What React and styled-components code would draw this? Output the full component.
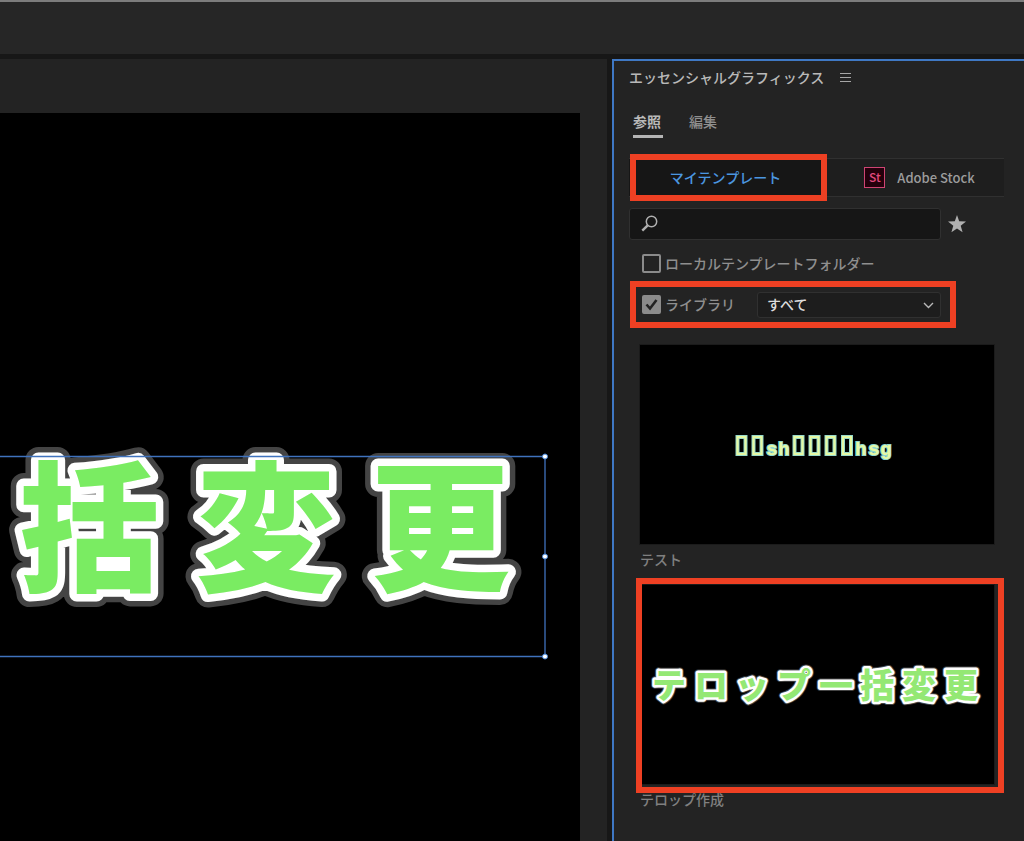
import React, { useState } from "react";
import styled, { createGlobalStyle } from "styled-components";

const GlobalStyle = createGlobalStyle`
  *,
  *::before,
  *::after {
    box-sizing: border-box;
  }

  body {
    margin: 0;
    background: #171717;
    color: #8f8f8f;
    font-family: "Noto Sans CJK JP", "Noto Sans", sans-serif;
    font-size: 14px;
    font-weight: 500;
    line-height: 20px;
  }

  button,
  input,
  select {
    margin: 0;
    font: inherit;
    color: inherit;
  }
`;

const Workspace = styled.div`
  display: flex;
  flex-direction: column;
  gap: 5px;
  min-height: 100vh;
`;

const TopBar = styled.header`
  height: 54px;
  background: #262626;
  border-top: 2px solid #7c7c7c;
`;

const Panels = styled.main`
  flex: 1;
  display: flex;
  gap: 5px;
`;

const Monitor = styled.section`
  flex: 1;
  min-width: 0;
  display: flex;
  padding: 54px 27px 0 0;
  background: #232323;
`;

const Program = styled.svg`
  flex: 1;
  min-width: 0;
  background: #000;
`;

const GraphicsPanel = styled.aside`
  width: 412px;
  padding: 0 20px 24px 15px;
  background: #232323;
  border: solid #3f78c4;
  border-width: 2px 0 0 2px;
`;

const PanelHeader = styled.div`
  display: flex;
  align-items: center;
  gap: 16px;
  height: 32px;
`;

const PanelTitle = styled.h1`
  margin: 0;
  font-size: 14px;
  font-weight: 500;
  color: #b9b9b9;
`;

const IconButton = styled.button`
  display: flex;
  padding: 0;
  border: 0;
  background: none;
  color: #a6a6a6;
`;

const Tabs = styled.div`
  display: flex;
  gap: 26px;
  margin-top: 14px;
  padding-left: 4px;
`;

const Tab = styled.button`
  height: 31px;
  padding: 0 2px 0 0;
  border: 0;
  border-bottom: 3px solid ${({ $active }) => ($active ? "#b4b4b4" : "transparent")};
  background: none;
  font-weight: ${({ $active }) => ($active ? 700 : 500)};
  color: ${({ $active }) => ($active ? "#b9b9b9" : "#8f8f8f")};
`;

const Marked = styled.div`
  position: relative;

  &::after {
    content: "";
    position: absolute;
    inset: ${({ $inset }) => $inset};
    border: 6px solid #ee4023;
    pointer-events: none;
  }
`;

const Sources = styled.div`
  display: grid;
  grid-template-columns: 197px 1fr;
  margin-top: 20px;
`;

const Source = styled.button`
  display: flex;
  align-items: center;
  justify-content: center;
  gap: 12px;
  width: 100%;
  height: 39px;
  padding: 0 4px 2px 0;
  border: solid #303030;
  border-width: 1px 0;
  background: ${({ $active }) => ($active ? "#161616" : "#1e1e1e")};
  color: ${({ $active }) => ($active ? "#4b96e0" : "#9c9c9c")};
`;

const StockSource = styled(Source)`
  padding: 0 0 0 9px;
  font-size: 13px;
`;

const StockBadge = styled.span`
  width: 21px;
  height: 21px;
  border: 1px solid #cf4473;
  background: #24000c;
  color: #e0487c;
  font-size: 12px;
  line-height: 18px;
`;

const SearchRow = styled.div`
  display: flex;
  align-items: center;
  gap: 7px;
  margin-top: 11px;
`;

const SearchBox = styled.label`
  display: flex;
  align-items: center;
  gap: 8px;
  width: 312px;
  height: 32px;
  padding: 0 11px 2px;
  border: 1px solid #303030;
  border-radius: 3px;
  background: #161616;
  color: #b0b0b0;
`;

const SearchInput = styled.input`
  flex: 1;
  min-width: 0;
  border: 0;
  outline: 0;
  background: none;
`;

const FilterRow = styled.div`
  display: flex;
  align-items: center;
  height: 26px;
  margin-top: ${({ $gap }) => $gap};
  padding-left: 13px;
`;

const CheckLabel = styled.label`
  display: flex;
  align-items: center;
  gap: 4px;
  padding-bottom: 2px;
`;

const CheckMark = styled.span`
  display: grid;
  width: 19px;
  height: 19px;

  > * {
    grid-area: 1 / 1;
  }

  svg {
    pointer-events: none;
  }
`;

const Checkbox = styled.input`
  appearance: none;
  width: 19px;
  height: 19px;
  border: 2px solid #8b8b8b;
  border-radius: 2px;

  &:checked {
    background: #8b8b8b;
  }
`;

const SelectBox = styled.div`
  display: grid;
  align-items: center;
  width: 184px;
  margin-left: 22px;

  > * {
    grid-area: 1 / 1;
  }

  svg {
    justify-self: end;
    margin-right: 7px;
    pointer-events: none;
  }
`;

const Select = styled.select`
  appearance: none;
  width: 100%;
  height: 26px;
  padding: 0 28px 2px 9px;
  border: 1px solid #303030;
  border-radius: 3px;
  background: #1d1d1d;
  color: #dcdcdc;
`;

const Gallery = styled.div`
  display: flex;
  flex-direction: column;
  gap: 9px;
  margin-top: 27px;
  padding: 0 10px 0 11px;
`;

const Template = styled.figure`
  margin: 0;
`;

const Thumb = styled.svg`
  display: block;
  width: 100%;
  height: 199px;
  background: #000;
  outline: 1px solid #1b1b1b;
`;

const TemplateName = styled.figcaption`
  padding: 5px 0 7px;
  color: #808080;
`;

const Telop = styled.text`
  font-family: "Noto Sans CJK JP", sans-serif;
  font-weight: 900;
  font-size: ${({ $size }) => $size}px;
  stroke-linejoin: round;
`;

// outer edge, white edge and fill, painted from back to front
function OutlinedText({ children, x, y, size, inner, outer, fill }) {
  return (
    <>
      <Telop aria-hidden="true" x={x} y={y} $size={size} fill="#444" stroke="#444" strokeWidth={outer}>
        {children}
      </Telop>
      <Telop x={x} y={y} $size={size} fill={fill} stroke="#fff" strokeWidth={inner} paintOrder="stroke">
        {children}
      </Telop>
    </>
  );
}

function ProgramMonitor() {
  return (
    <Monitor>
      <Program viewBox="0 0 580 728" preserveAspectRatio="xMaxYMin slice">
        <OutlinedText x="19 196 370" y="467" size={140} inner={15} outer={26} fill="#7aec62">
          括変更
        </OutlinedText>
        <path d="M-2000 343.500H545V543.500H-2000" fill="none" stroke="#3f72bd" strokeWidth="1.300" />
        {[343.5, 443.5, 543.5].map((cy) => (
          <circle key={cy} cx="545" cy={cy} r="2.500" fill="#fff" stroke="#4383d6" />
        ))}
      </Program>
    </Monitor>
  );
}

function MenuIcon() {
  return (
    <svg width="11" height="11" viewBox="0 0 11 11" stroke="currentColor" strokeWidth="1.200">
      <path d="M0 1.500H11M0 5.500H11M0 9.500H11" />
    </svg>
  );
}

function SearchIcon() {
  return (
    <svg width="17" height="17" viewBox="0 0 17 17" fill="none" stroke="currentColor">
      <circle cx="10.500" cy="6.500" r="5.200" strokeWidth="1.500" />
      <path d="M6.700 10.300L1.300 15.700" strokeWidth="2.400" />
    </svg>
  );
}

function StarIcon() {
  return (
    <svg width="18" height="18" viewBox="0 0 18 18" fill="#b0b0b0">
      <path d="M9 0L11.200 6.300L18 6.600L12.700 10.700L14.600 17.300L9 13.400L3.400 17.300L5.300 10.700L0 6.600L6.800 6.300Z" />
    </svg>
  );
}

function CheckField({ label, checked, onChange }) {
  return (
    <CheckLabel>
      <CheckMark>
        <Checkbox type="checkbox" checked={checked} onChange={(e) => onChange(e.target.checked)} />
        {checked && (
          <svg width="19" height="19" viewBox="0 0 19 19" fill="none" stroke="#232323" strokeWidth="2.600">
            <path d="M4.500 9.500L8 13.500L14.500 5" />
          </svg>
        )}
      </CheckMark>
      {label}
    </CheckLabel>
  );
}

function TestThumb() {
  return (
    <Thumb viewBox="0 0 354 199">
      <g fill="none" stroke="#8fd6cf" strokeWidth="4">
        {[97.5, 113.5, 154.5, 170.5, 186.5, 203].map((x) => (
          <rect key={x} x={x} y="92" width="8" height="17" />
        ))}
      </g>
      <g fill="none" stroke="#e6f9a4" strokeWidth="2.200">
        {[97.5, 113.5, 154.5, 170.5, 186.5, 203].map((x) => (
          <rect key={x} x={x} y="92" width="8" height="17" />
        ))}
      </g>
      <g
        fontFamily="Liberation Mono, monospace"
        fontWeight="700"
        fontSize="19"
        fill="#e6f9a4"
        stroke="#8fd6cf"
        strokeWidth="2"
        paintOrder="stroke"
      >
        <text x="126 138" y="110">sh</text>
        <text x="215 228 240" y="110">hsg</text>
      </g>
    </Thumb>
  );
}

export default function App() {
  const [tab, setTab] = useState("参照");
  const [local, setLocal] = useState(false);
  const [library, setLibrary] = useState(true);

  return (
    <>
      <GlobalStyle />
      <Workspace>
        <TopBar />
        <Panels>
          <ProgramMonitor />
          <GraphicsPanel>
            <PanelHeader>
              <PanelTitle>エッセンシャルグラフィックス</PanelTitle>
              <IconButton aria-label="パネルメニュー">
                <MenuIcon />
              </IconButton>
            </PanelHeader>

            <Tabs>
              {["参照", "編集"].map((name) => (
                <Tab key={name} $active={tab === name} onClick={() => setTab(name)}>
                  {name}
                </Tab>
              ))}
            </Tabs>

            <Sources>
              <Marked $inset="-4px -1px -4px 1px">
                <Source $active>マイテンプレート</Source>
              </Marked>
              <StockSource>
                <StockBadge>St</StockBadge>
                Adobe Stock
              </StockSource>
            </Sources>

            <SearchRow>
              <SearchBox>
                <SearchIcon />
                <SearchInput type="text" aria-label="検索" />
              </SearchBox>
              <IconButton aria-label="お気に入り">
                <StarIcon />
              </IconButton>
            </SearchRow>

            <FilterRow $gap="11px">
              <CheckField label="ローカルテンプレートフォルダー" checked={local} onChange={setLocal} />
            </FilterRow>
            <Marked $inset="-11px 48px -10px 1px">
              <FilterRow $gap="15px">
                <CheckField label="ライブラリ" checked={library} onChange={setLibrary} />
                <SelectBox>
                  <Select aria-label="ライブラリ">
                    <option>すべて</option>
                  </Select>
                  <svg width="11" height="7" viewBox="0 0 11 7" fill="none" stroke="#b9b9b9" strokeWidth="1.400">
                    <path d="M1 1L5.500 5.500L10 1" />
                  </svg>
                </SelectBox>
              </FilterRow>
            </Marked>

            <Gallery>
              <Template>
                <TestThumb />
                <TemplateName>テスト</TemplateName>
              </Template>
              <Template>
                <Marked $inset="-7px -10px -9px -4px">
                  <Thumb viewBox="0 0 354 199">
                    <OutlinedText
                      x="12 54 95 137 179 220 262 304"
                      y="113"
                      size={34}
                      inner={5}
                      outer={7}
                      fill="#94e874"
                    >
                      テロップ一括変更
                    </OutlinedText>
                  </Thumb>
                </Marked>
                <TemplateName>テロップ作成</TemplateName>
              </Template>
            </Gallery>
          </GraphicsPanel>
        </Panels>
      </Workspace>
    </>
  );
}
